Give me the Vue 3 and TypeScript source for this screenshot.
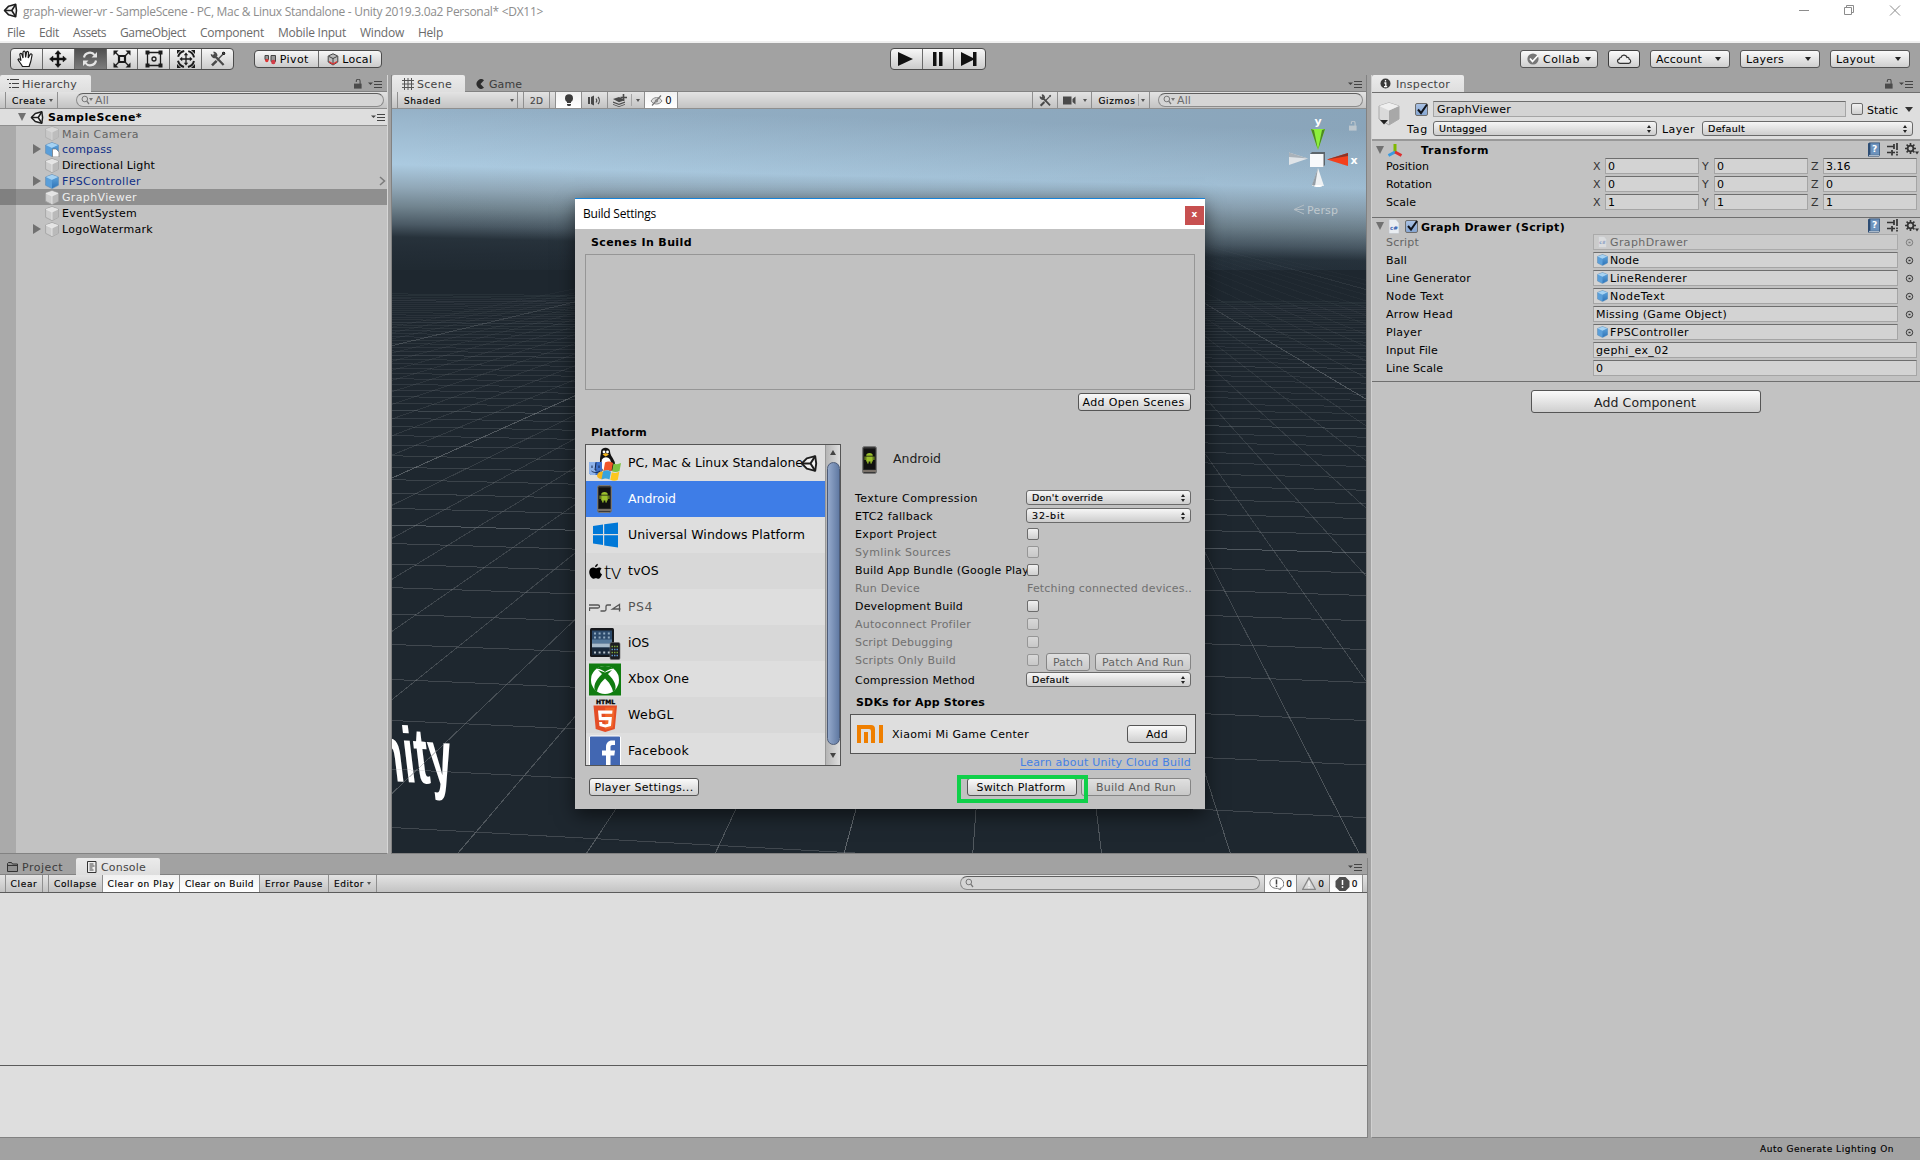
<script setup lang="ts">
import type { Directive } from 'vue'

/* Spreads the letters of an element so that its text spans the given width. */
const vFit: Directive<HTMLElement, number> = {
  mounted(el, { value }) {
    const n = (el.textContent ?? '').trim().length
    el.style.letterSpacing = '0px'
    const natural = el.getBoundingClientRect().width
    if (n > 1) el.style.letterSpacing = `${((value - natural) / n).toFixed(3)}px`
  }
}

const menus = [
  ['File', 18, 14], ['Edit', 20, 14], ['Assets', 33, 14], ['GameObject', 66, 14],
  ['Component', 64, 14], ['Mobile Input', 68, 14], ['Window', 44, 14], ['Help', 25, 0]
] as [string, number, number][]

const tools = ['hand', 'move', 'rotate', 'scale', 'rect', 'multi', 'wrench']

interface Node { name: string; w: number; kind: 'plain' | 'prefab' | 'dim'; open?: boolean; selected?: boolean; chevron?: boolean; doc?: boolean }
const nodes: Node[] = [
  { name: 'Main Camera', w: 77, kind: 'dim' },
  { name: 'compass', w: 50, kind: 'prefab', open: true, doc: true },
  { name: 'Directional Light', w: 93, kind: 'plain' },
  { name: 'FPSController', w: 79, kind: 'prefab', open: true, chevron: true },
  { name: 'GraphViewer', w: 75, kind: 'plain', selected: true },
  { name: 'EventSystem', w: 75, kind: 'plain' },
  { name: 'LogoWatermark', w: 91, kind: 'plain', open: true }
]

const transform = [
  { label: 'Position', w: 43, v: ['0', '0', '3.16'] },
  { label: 'Rotation', w: 46, v: ['0', '0', '0'] },
  { label: 'Scale', w: 30, v: ['1', '1', '1'] }
]
const axes = ['X', 'Y', 'Z']

const props = [
  { label: 'Script', w: 33, value: 'GraphDrawer', vw: 78, icon: 'cs', dim: true, pick: true },
  { label: 'Ball', w: 21, value: 'Node', vw: 29, icon: 'cube', pick: true },
  { label: 'Line Generator', w: 85, value: 'LineRenderer', vw: 77, icon: 'cube', pick: true },
  { label: 'Node Text', w: 58, value: 'NodeText', vw: 55, icon: 'cube', pick: true },
  { label: 'Arrow Head', w: 67, value: 'Missing (Game Object)', vw: 131, icon: '', pick: true },
  { label: 'Player', w: 36, value: 'FPSController', vw: 79, icon: 'cube', pick: true },
  { label: 'Input File', w: 52, value: 'gephi_ex_02', vw: 73, icon: '', pick: false },
  { label: 'Line Scale', w: 57, value: '0', vw: 7, icon: '', pick: false }
]

const platforms = [
  { id: 'pc', name: 'PC, Mac & Linux Standalone', w: 175 },
  { id: 'android', name: 'Android', w: 48 },
  { id: 'uwp', name: 'Universal Windows Platform', w: 177 },
  { id: 'tvos', name: 'tvOS', w: 31 },
  { id: 'ps4', name: 'PS4', w: 25 },
  { id: 'ios', name: 'iOS', w: 21 },
  { id: 'xbox', name: 'Xbox One', w: 61 },
  { id: 'webgl', name: 'WebGL', w: 46 },
  { id: 'fb', name: 'Facebook', w: 61 }
]

const options = [
  { label: 'Texture Compression', w: 123, popup: "Don't override", pw: 71 },
  { label: 'ETC2 fallback', w: 78, popup: '32-bit', pw: 33 },
  { label: 'Export Project', w: 82, check: true },
  { label: 'Symlink Sources', w: 96, check: true, dim: true },
  { label: 'Build App Bundle (Google Play', w: 174, check: true },
  { label: 'Run Device', w: 65, dim: true, text: 'Fetching connected devices..', tw: 165 },
  { label: 'Development Build', w: 108, check: true },
  { label: 'Autoconnect Profiler', w: 116, check: true, dim: true },
  { label: 'Script Debugging', w: 98, check: true, dim: true },
  { label: 'Scripts Only Build', w: 101, check: true, dim: true, patch: true },
  { label: 'Compression Method', w: 120, popup: 'Default', pw: 37 }
]

const HORIZON = 195
const VANISH_X = 1022
const rowLines = Array.from({ length: 54 }, (_, n) => {
  const d = 1 / (0.001581 + 0.000161 * n)
  const y1 = HORIZON + d
  return {
    y1,
    y2: HORIZON + d * (1 + 974 / 11500),
    o: Math.max(0, Math.min(0.26, (y1 - 225) / 1300 + 0.02)) * (n % 10 === 9 ? 1.5 : 1)
  }
})
const colLines = Array.from({ length: 46 }, (_, i) => {
  const xb = 458 + 128.7 * (i - 20)
  return { x: xb, major: (i - 20 + 7) % 10 === 0 }
})
</script>

<template>
  <svg width="0" height="0" class="defs">
    <defs>
      <linearGradient id="gb" x1="0" y1="0" x2="0" y2="1"><stop offset="0" stop-color="#5a9fd8" /><stop offset="1" stop-color="#2f74b8" /></linearGradient>
      <symbol id="cube" viewBox="0 0 14 15">
        <path d="M7 .5 13.4 3v8.3L7 14.6.6 11.3V3z" fill="#cdcdcd" stroke="#a0a0a0" stroke-width=".8" />
        <path d="M7 .9 13 3.1 7 6 1 3.1z" fill="#e4e4e4" />
        <path d="M7 6.2 13 3.3v7.9L7 14.2z" fill="#bababa" />
        <path d="M1 3.2 7 6l6-2.8M7 6v8" fill="none" stroke="#f0f0f0" stroke-width=".7" />
      </symbol>
      <symbol id="bcube" viewBox="0 0 14 15">
        <path d="M7 .5 13.4 3v8.3L7 14.6.6 11.3V3z" fill="#5a9fda" stroke="#5c87ad" stroke-width=".6" />
        <path d="M7 .7 13.2 3.1 7 6 .8 3.1z" fill="#a6d2f2" />
        <path d="M7 6.1 13.2 3.2v7.9L7 14.3z" fill="url(#gb)" />
      </symbol>
      <symbol id="unity" viewBox="0 0 18 18">
        <path d="M1.800 9 6.800 3.800 15.200 1.600 16.200 9 15.200 16.400 6.800 14.200z" fill="#f2f2f2" stroke="#1d1d1d" stroke-width="1.900" stroke-linejoin="round" />
        <path d="M1.800 9h8.700M15.200 1.600 10.500 9l4.700 7.400" fill="none" stroke="#1d1d1d" stroke-width="2" />
      </symbol>
      <symbol id="wrench" viewBox="0 0 16 16">
        <path d="M4.5 4.5 13.6 14M3 5.5 5.5 3" stroke="#4a4a4a" stroke-width="2.2" fill="none" />
        <path d="M1.5 3.2A3.3 3.3 0 0 0 6.4 6M3.5 1.3A3.3 3.3 0 0 1 6.6 5" stroke="#4a4a4a" stroke-width="1.7" fill="none" />
        <path d="M2 14.4 6.6 9.8" stroke="#4a4a4a" stroke-width="2.6" />
        <path d="M7 9.2 13.2 3" stroke="#4a4a4a" stroke-width="1.4" /><path d="m12 2 2-1 1 1-1 2z" fill="#4a4a4a" />
      </symbol>
      <symbol id="panelmenu" viewBox="0 0 14 8">
        <path d="M0 2.5h5L2.5 5z" fill="#444" /><path d="M6 1.5h8M6 4.5h8M6 7.5h8" stroke="#444" stroke-width="1" />
      </symbol>
      <symbol id="lock" viewBox="0 0 8 10">
        <rect x="0" y="4.6" width="7.6" height="5" fill="currentColor" /><path d="M2.3 3V2.2a1.9 1.9 0 0 1 3.8 0V5" fill="none" stroke="currentColor" stroke-width="1.1" />
      </symbol>
      <symbol id="phone" viewBox="0 0 15 28">
        <rect x=".5" y=".5" width="14" height="27" rx="2" fill="#3a3a3a" stroke="#777" /><rect x="1.8" y="2.5" width="11.4" height="21" fill="#111" />
        <path d="M1 25h13" stroke="#8b8177" stroke-width="1.6" />
        <path d="M4.2 9.8a3.3 2.8 0 0 1 6.6 0zM4.2 10.4h6.6v5H4.2zM2.6 10.6h1v3.4h-1zM11.4 10.6h1v3.4h-1zM5.2 15h1.4v2.6H5.2zM8.4 15h1.4v2.6H8.4z" fill="#9bc02c" />
      </symbol>
      <symbol id="search" viewBox="0 0 12 10">
        <circle cx="3.8" cy="4" r="2.8" fill="none" stroke="#777" stroke-width="1" /><path d="M5.8 6.2 8 9" stroke="#777" stroke-width="1.3" />
      </symbol>
      <symbol id="dots" viewBox="0 0 6 8"><path d="M3 0 5 3H1zM3 8 1 5h4z" fill="#222" /></symbol>
      <symbol id="book" viewBox="0 0 14 15">
        <path d="M1 1.5 2.5.5h10.4v12.6L12 14.5H1z" fill="#2d4d74" /><path d="M3.4 1.3h8.8v11.4H3.4z" fill="#6d93bd" />
        <path d="M2 13.4h10" stroke="#dde6ee" stroke-width=".8" />
      </symbol>
      <symbol id="preset" viewBox="0 0 12 13">
        <path d="M0 3.500h7M7 1v5M0 9.500h4M5 7v5.500M5 9.500h3M10 0v7M10 8.500v1.700M10 11v1.600" stroke="#333" stroke-width="1.700" />
      </symbol>
      <symbol id="gear" viewBox="0 0 14 12">
        <circle cx="5.5" cy="5.5" r="2.9" fill="none" stroke="#333" stroke-width="1.8" />
        <path d="M5.5 0v2M5.5 9v2M0 5.5h2M9 5.5h2M1.6 1.6 3 3M8 8l1.4 1.4M9.4 1.6 8 3M1.6 9.4 3 8" stroke="#333" stroke-width="1.6" />
        <path d="M10 8.5h4l-2 3z" fill="#333" />
      </symbol>
      <symbol id="cs" viewBox="0 0 12 15">
        <path d="M1 .5h7L11 4v10.5H1z" fill="#e9edf2" stroke="#bfc4cb" stroke-width=".6" />
        <text x="6" y="10.6" text-anchor="middle" font-family="DejaVu Sans, sans-serif" font-weight="700" font-size="5.6" fill="#3a66b5">c#</text>
      </symbol>
    </defs>
  </svg>

  <div class="app">
    <header class="title">
      <svg class="logo" width="15" height="15"><use href="#unity" /></svg>
      <span v-fit="520" class="t seg">graph-viewer-vr - SampleScene - PC, Mac &amp; Linux Standalone - Unity 2019.3.0a2 Personal* &lt;DX11&gt;</span>
      <svg class="wc" width="110" height="20" viewBox="0 0 110 20" fill="none" stroke="#8c8c8c" stroke-width="1">
        <path d="M5 10.5h10M50.5 7.5h7v7h-7zM52.5 7V5.5h7v7H58M96 5.500l10 10M106 5.500l-10 10" />
      </svg>
    </header>
    <nav class="menubar">
      <span v-for="m in menus" :key="m[0]" v-fit="m[1]" class="t seg" :style="{ marginRight: m[2] + 'px' }">{{ m[0] }}</span>
    </nav>

    <div class="toolbar">
      <div class="group tools">
        <span v-for="t in tools" :key="t" class="cell" :class="{ on: t === 'rotate' }">
          <svg width="20" height="20" viewBox="0 0 20 20" fill="none" stroke="#1c1c1c">
            <path v-if="t === 'hand'" d="M6.5 17.500c-1-2-3.500-5-4.500-7 .8-1.300 2-.5 3 1.200L3.800 5.500c.2-1.500 1.900-1.400 2.200 0l1 3.500L7 3.300c.3-1.500 2-1.500 2.300 0L9.600 8.500l.9-5.200c.5-1.300 2-1 2 .3L12.200 9l1.900-3.600c.8-1.100 2.200-.4 1.900.9-.5 2.200-.7 4.300-1.300 6.400-.4 1.700-1.200 3-1.500 4.800z" fill="#fff" stroke-width="1.2" />
            <path v-else-if="t === 'move'" d="M10 1.500 13 5h-2v4h4V7l3.500 3-3.500 3v-2h-4v4h2l-3 3.500L7 15h2v-4H5v2l-3.500-3L5 7v2h4V5H7z" fill="#111" stroke-width=".5" />
            <g v-else-if="t === 'rotate'" stroke="#e4e4e4" stroke-width="2.200">
              <path d="M4 8.500C5 3 12 2.300 14.500 6M16 11.500c-1 5.500-8 6.200-10.500 2.500" /><path d="m17 3v5.500h-5.500zM3 17v-5.500h5.500z" fill="#e4e4e4" stroke="none" />
            </g>
            <g v-else-if="t === 'scale'">
              <path d="M7 7h6v6H7z" stroke-width="2.200" /><path d="M7 7 3 3m10 4 4-4M7 13l-4 4m10-4 4 4" stroke-width="1.300" />
              <path d="M1.500 1.500h5l-5 5zM18.500 1.500h-5l5 5zM1.500 18.500h5l-5-5zM18.500 18.500h-5l5-5z" fill="#1c1c1c" stroke="none" />
            </g>
            <g v-else-if="t === 'rect'">
              <path d="M3.500 3.500h13v13h-13z" stroke-width="1.300" /><circle cx="10" cy="10" r="2" stroke-width="1.300" />
              <path d="M1.500 1.500h4v4h-4zM14.500 1.500h4v4h-4zM1.500 14.500h4v4h-4zM14.500 14.500h4v4h-4z" fill="#1c1c1c" stroke="none" />
            </g>
            <g v-else-if="t === 'multi'">
              <circle cx="10" cy="10" r="8.200" stroke-width="2" stroke-dasharray="8.800 4.100" stroke-dashoffset="-2" />
              <path d="M10 5v10M5 10h10" stroke-width="1.300" /><path d="m10 3.500 2.200 2.700H7.800zM10 16.500l2.200-2.700H7.800zM3.500 10l2.700-2.200v4.400zM16.500 10l-2.700-2.200v4.400zM1 1h4L1 5zM19 1h-4l4 4zM1 19h4l-4-4zM19 19h-4l4-4z" fill="#1c1c1c" stroke="none" />
            </g>
            <use v-else href="#wrench" x="2" y="2" width="16" height="16" />
          </svg>
        </span>
      </div>
      <div class="group pivot">
        <span class="cell"><svg width="13" height="12" viewBox="0 0 13 12"><path d="M1 2.500h3.500v4H1zM7 2.500h4.500v6H7z" fill="#999" stroke="#444" /><circle cx="2.800" cy="7.500" r="1.700" fill="#d33" /><circle cx="9.300" cy="9" r="2.200" fill="#d23c48" /></svg><b v-fit="29" class="t">Pivot</b></span>
        <span class="cell"><svg width="12" height="13" viewBox="0 0 12 13"><path d="M6 .8 10.800 3v6L6 12 1.200 9V3z" fill="#bbb" stroke="#444" /><path d="M6 5v6M2 3.500 6 5.500l4-2" stroke="#444" fill="none" /><path d="m2 8 4 2.200L10 8v1.500l-4 2.300-4-2.300z" fill="#d33" /></svg><b v-fit="30" class="t">Local</b></span>
      </div>
      <div class="group play">
        <span class="cell"><svg width="16" height="14"><path d="M0 0v14l15-7z" fill="#111" /></svg></span>
        <span class="cell"><svg width="10" height="14"><path d="M0 0h3.500v14H0zM6 0h3.500v14H6z" fill="#111" /></svg></span>
        <span class="cell"><svg width="16" height="14"><path d="M0 0v14l12-6v6h3.500V0H12v6z" fill="#111" /></svg></span>
      </div>
      <div class="account">
        <span class="btn collab"><svg width="12" height="12" viewBox="0 0 12 12"><circle cx="6" cy="6" r="5.600" fill="#777" /><path d="m3 5.500 2.500 3L11 2.500" stroke="#fff" stroke-width="1.800" fill="none" /></svg><b v-fit="37" class="t">Collab</b><i class="dn" /></span>
        <span class="btn cloud"><svg width="16" height="12" viewBox="0 0 16 12"><path d="M4 10.300h8.800a2.100 2.100 0 0 0 .4-4.100C13 4.500 11.700 4.200 11 4.500 10.300 1.800 6 1 5 4.500c-1 0-1.700.6-1.700 1.700C.7 6.700 1 10.200 4 10.300z" fill="#eee" stroke="#333" stroke-width="1.200" /></svg></span>
        <span class="btn drop"><b v-fit="46" class="t">Account</b><i class="dn" /></span>
        <span class="btn drop"><b v-fit="38" class="t">Layers</b><i class="dn" /></span>
        <span class="btn drop"><b v-fit="39" class="t">Layout</b><i class="dn" /></span>
      </div>
    </div>

    <div class="body">
      <div class="left">
        <div class="upper">
          <section class="hierarchy">
            <div class="tabs">
              <span class="tab on w91"><svg width="12" height="11" viewBox="0 0 12 11"><path d="M3 1.500h9M5 5.500h7M5 9.500h7M0 1.500h2M2 5.500h2M2 9.500h2" stroke="#444" /></svg><b v-fit="55" class="t">Hierarchy</b></span>
              <span class="tabright"><svg width="8" height="10" class="dk"><use href="#lock" /></svg><svg width="14" height="8"><use href="#panelmenu" /></svg></span>
            </div>
            <div class="bar">
              <span class="seg0" />
              <span class="bi create"><b v-fit="34" class="t s">Create</b><i class="dn sm" /></span>
              <span class="search hs"><svg width="12" height="10"><use href="#search" /></svg><i class="dn sm" /><b v-fit="14" class="t">All</b></span>
            </div>
            <div class="scenerow">
              <i class="tri open" /><svg width="14" height="15"><use href="#unity" /></svg><b v-fit="94" class="t bold">SampleScene*</b><svg class="rm" width="14" height="8"><use href="#panelmenu" /></svg>
            </div>
            <div class="tree">
              <div v-for="n in nodes" :key="n.name" class="node" :class="[n.kind, { sel: n.selected }]">
                <span class="strip" />
                <span class="fold"><i v-if="n.open" class="tri" /></span>
                <svg width="15" height="15" viewBox="0 0 15 15"><use :href="n.kind === 'prefab' ? '#bcube' : '#cube'" width="14" height="15" /><path v-if="n.doc" d="M7.500 7h3.500l3 3v5h-6.500z" fill="#fff" stroke="#777" stroke-width=".7" /></svg>
                <b v-fit="n.w" class="t">{{ n.name }}</b>
                <svg v-if="n.chevron" class="chev" width="7" height="10"><path d="m1 1 4.500 4L1 9" fill="none" stroke="#7b7b7b" stroke-width="1.500" /></svg>
              </div>
              <div class="rest"><span class="strip" /></div>
            </div>
          </section>

          <section class="scene">
            <div class="tabs">
              <span class="tab on w73"><svg width="12" height="12" viewBox="0 0 12 12"><path d="M2.500 0v12M6 0v12M9.500 0v12M0 2.500h12M0 6h12M0 9.500h12" stroke="#555" /></svg><b v-fit="35" class="t">Scene</b></span>
              <span class="tab game"><svg width="9" height="10" viewBox="0 0 9 10"><path d="M8 1.200A4.600 4.800 0 1 0 8 8.800L4.500 5z" fill="#2c2c2c" /></svg><b v-fit="33" class="t">Game</b></span>
              <span class="tabright r4"><svg width="14" height="8"><use href="#panelmenu" /></svg></span>
            </div>
            <div class="bar">
              <span class="seg0" />
              <span class="bi shaded"><b v-fit="37" class="t s">Shaded</b><i class="dn sm" /></span>
              <span class="gap5" />
              <span class="bi twod"><b v-fit="13" class="t s">2D</b></span>
              <span class="gap5" />
              <span class="bi hi w26"><svg width="10" height="13" viewBox="0 0 10 13"><circle cx="5" cy="4.200" r="4" fill="#3d3d3d" /><path d="M3 7h4v2H3zM3 10h4v1.200L6 12H4L3 11.200z" fill="#3d3d3d" /></svg></span>
              <span class="bi w26"><svg width="13" height="11" viewBox="0 0 13 11"><path d="M0 2h2v7H0zM3 2l3-1.500v10L3 9z" fill="#4a4a4a" /><path d="M8 3.500c.8 1 .8 3 0 4M10 2c1.800 2 1.800 5 0 7" stroke="#4a4a4a" fill="none" stroke-width="1.200" /></svg></span>
              <span class="bi w37"><svg width="14" height="13" viewBox="0 0 14 13"><path d="m0 5 6-2 6 3-6 2.200zM0 7.500l6 2.300 6-2.300v1.200L6 11 0 8.700zM0 10l6 2.300L12 10v.8L6 13 0 10.800z" fill="#4a4a4a" /><path d="M10.500 0v7M7.500 3.500h6.500" stroke="#4a4a4a" stroke-width="1.600" /></svg><i class="vl" /><i class="dn sm" /></span>
              <span class="bi hi w33"><svg width="13" height="11" viewBox="0 0 13 11"><path d="M1 6c2.500-4.500 8.500-4.500 11 0-2.500 4-8.500 4-11 0z" fill="#ddd" stroke="#888" /><path d="M2 10.500 11 .5" stroke="#777" stroke-width="1.200" /><circle cx="6.500" cy="5.800" r="1.600" fill="#888" /></svg><b class="t z">0</b></span>
              <span class="grow" />
              <span class="bi lft w26"><svg width="13" height="13"><use href="#wrench" /></svg></span>
              <span class="bi w34"><svg width="13" height="9"><path d="M0 .5h8.500v8H0zM9.500 3 12.500.5v8L9.500 6z" fill="#4a4a4a" /></svg><i class="dn sm" /></span>
              <span class="bi w58"><b v-fit="37" class="t s">Gizmos</b><i class="vl" /><i class="dn sm" /></span>
              <span class="search ss"><svg width="12" height="10"><use href="#search" /></svg><i class="dn sm" /><b v-fit="14" class="t">All</b></span>
            </div>
            <svg class="view" width="974" height="744" viewBox="392 109 974 744">
              <defs>
                <linearGradient id="sky" gradientUnits="userSpaceOnUse" x1="500" y1="109" x2="496" y2="270">
                  <stop offset="0" stop-color="#94b0c6" /><stop offset=".36" stop-color="#abcae0" /><stop offset=".5" stop-color="#91a8b8" /><stop offset=".62" stop-color="#71848f" />
                  <stop offset=".73" stop-color="#4b5a65" /><stop offset=".81" stop-color="#27323b" /><stop offset=".9" stop-color="#232d36" /><stop offset="1" stop-color="#202a32" />
                </linearGradient>
                <linearGradient id="side" x1="0" x2="1" y1="0" y2="0"><stop offset="0" stop-color="#1e3040" stop-opacity="0" /><stop offset="1" stop-color="#1e3040" stop-opacity=".09" /></linearGradient>
                <linearGradient id="fade" gradientUnits="userSpaceOnUse" x1="0" y1="240" x2="0" y2="853"><stop offset="0" stop-color="#858a8e" stop-opacity="0" /><stop offset=".4" stop-color="#858a8e" stop-opacity=".25" /><stop offset="1" stop-color="#858a8e" stop-opacity=".5" /></linearGradient>
                <linearGradient id="fadem" gradientUnits="userSpaceOnUse" x1="0" y1="240" x2="0" y2="600"><stop offset="0" stop-color="#94999d" stop-opacity="0" /><stop offset=".4" stop-color="#94999d" stop-opacity=".4" /><stop offset="1" stop-color="#94999d" stop-opacity=".55" /></linearGradient>
              </defs>
              <rect x="392" y="109" width="974" height="744" fill="#1e272f" />
              <rect x="392" y="109" width="974" height="161" fill="url(#sky)" />
              <rect x="392" y="109" width="974" height="161" fill="url(#side)" />
              <text class="mark" transform="matrix(.53 .035 .12 1 391 781)" x="-20" y="0">nity</text>
              <g shape-rendering="crispEdges" fill="none">
                <line v-for="(l, i) in rowLines" :key="'r' + i" x1="392" :y1="l.y1" x2="1366" :y2="l.y2" stroke="#a6abaf" :stroke-opacity="l.o" />
                <line v-for="(l, i) in colLines" :key="'c' + i" :x1="l.x" y1="853" :x2="VANISH_X + (l.x - VANISH_X) * 0.06" y2="234.500" :stroke="l.major ? 'url(#fadem)' : 'url(#fade)'" />
              </g>
              <path d="M1289 152.500 1308 158.500 1289 165z" fill="#dfe4e8" /><path d="M1289 152.500 1308 158.500 1289 157z" fill="#a9b2ba" />
              <path d="M1318 168 1324 186 1312 186z" fill="#eef1f3" /><path d="M1318 168 1315 186 1312 185z" fill="#939da5" />
              <ellipse cx="1318" cy="186" rx="4" ry="1" fill="#fff" />
              <path d="M1311 129h14l-7 21z" fill="#8df03c" /><path d="m1311 129 3 1 4 20zM1325 129l-3 1-4 20z" fill="#4d8a22" />
              <path d="M1348 153v13l-21-6.500z" fill="#f4401c" /><path d="M1348 153v3l-21 3.500zM1348 166l-3-1-18-5.500z" fill="#8b3427" />
              <path d="m1310 154 2-2h13v13l-2 2z" fill="#5d656b" /><path d="M1310 154h13.500v13H1310z" fill="#f7f9fb" />
              <text x="1318" y="125" text-anchor="middle" class="ax">y</text><text x="1354" y="164" text-anchor="middle" class="ax">x</text>
              <g class="lk"><use href="#lock" x="1349" y="121" width="8" height="10" /></g>
              <path d="m1304 205-10 4.500 10 4.500M1294 209.500h10" stroke="#b3bdc4" fill="none" />
              <text x="1307" y="214" textLength="31" class="persp">Persp</text>
            </svg>
          </section>
        </div>

        <section class="console">
          <div class="tabs">
            <span class="tab proj"><svg width="12" height="10" viewBox="0 0 12 10"><path d="M.5 9.500v-8l1-1h3l1 1.500h5v7.500zM.5 3.500h10" fill="#8f8f8f" stroke="#333" /></svg><b v-fit="41" class="t">Project</b></span>
            <span class="tab on cons"><svg width="10" height="12" viewBox="0 0 10 12"><path d="M.5.5h8.500v11H.5z" fill="#eee" stroke="#333" /><path d="M2.500 3h4M2.500 5h5M2.500 7h3M2.500 9h4" stroke="#444" /></svg><b v-fit="45" class="t">Console</b></span>
            <span class="tabright r5"><svg width="14" height="8"><use href="#panelmenu" /></svg></span>
          </div>
          <div class="bar">
            <span class="seg0" />
            <span class="bi w37"><b v-fit="27" class="t s">Clear</b></span>
            <span class="gap5" />
            <span class="bi w54"><b v-fit="43" class="t s">Collapse</b></span>
            <span class="bi hi w77"><b v-fit="67" class="t s">Clear on Play</b></span>
            <span class="bi hi w80"><b v-fit="69" class="t s">Clear on Build</b></span>
            <span class="bi w69"><b v-fit="58" class="t s">Error Pause</b></span>
            <span class="bi w48"><b v-fit="30" class="t s">Editor</b><i class="dn sm" /></span>
            <span class="grow" />
            <span class="search cs"><svg width="12" height="10"><use href="#search" /></svg></span>
            <span class="bi lft hi w33"><svg width="15" height="13" viewBox="0 0 15 13"><path d="M7.500.7c9 0 9 10.500 3.500 10.500l.5 1.500-3-1.300C-1.500 11.800-1.500.7 7.500.7z" fill="#fff" stroke="#777" /><path d="M7.500 2.500v5M7.500 8.500v1.500" stroke="#444" stroke-width="1.500" /></svg><b class="t s">0</b></span>
            <span class="bi w33"><svg width="14" height="13" viewBox="0 0 14 13"><path d="m7 .8 6.300 11.500H.7z" fill="#d9d9d9" stroke="#888" stroke-width="1.300" /><path d="M7 4v5M7 10v1.200" stroke="#f7f7f7" stroke-width="1.400" /></svg><b class="t s">0</b></span>
            <span class="bi hi w33"><svg width="15" height="14" viewBox="0 0 15 14"><path d="M4.500 0h6L14.500 4v6l-4 4h-6l-4-4V4z" fill="#4d4d4d" /><path d="M7.500 3v5M7.500 9.200v1.800" stroke="#fff" stroke-width="1.500" /></svg><b class="t s">0</b></span>
            <span class="end" />
          </div>
          <div class="log" /><div class="detail" />
        </section>
      </div>

      <aside class="inspector">
        <div class="tabs">
          <span class="tab on insp"><svg width="11" height="11"><circle cx="5.500" cy="5.500" r="5" fill="#3a3a3a" /><path d="M5.500 2v1.600M4.300 5h1.500v3.500M4 8.700h3.200" stroke="#fff" stroke-width="1.300" fill="none" /></svg><b v-fit="54" class="t">Inspector</b></span>
          <span class="tabright r7"><svg width="8" height="10" class="dk"><use href="#lock" /></svg><svg width="14" height="8"><use href="#panelmenu" /></svg></span>
        </div>
        <div class="obj">
          <div class="big"><svg width="22" height="24" viewBox="0 0 22 24"><path d="M11 .8 21 4v13L11 23 1 17V4z" fill="#dadada" stroke="#aaa" /><path d="M11 8.500 21 4v13L11 23z" fill="#a8a8a8" /><path d="M11 .8 21 4 11 8.500 1 4z" fill="#efefef" /><path d="M2 18h8l-4 4.500z" fill="#222" /></svg></div>
          <div class="objr">
            <div class="line1"><span class="cb on"><svg width="13" height="13"><path d="M2 6.500 5 10 11 1.500" stroke="#10131a" stroke-width="2" fill="none" /></svg></span><span class="field nm"><b v-fit="74" class="t">GraphViewer</b></span><span class="cb st" /><b v-fit="31" class="t stt">Static</b><i class="dn big2" /></div>
            <div class="line2"><b v-fit="21" class="t tag">Tag</b><span class="pop tagp"><b v-fit="48" class="t s9">Untagged</b><svg width="6" height="8"><use href="#dots" /></svg></span><b v-fit="33" class="t lay">Layer</b><span class="pop layp"><b v-fit="37" class="t s9">Default</b><svg width="6" height="8"><use href="#dots" /></svg></span></div>
          </div>
        </div>
        <div class="comp">
          <div class="chead h17"><i class="tri open" /><svg class="ti" width="16" height="14" viewBox="0 0 16 14"><path d="M8 1v8" stroke="#7fb800" stroke-width="3" /><path d="m8 9-6.500 3.500" stroke="#3a9be0" stroke-width="3" /><path d="m8 9 6.500 3.500" stroke="#dc2f2f" stroke-width="3" /></svg><b v-fit="68" class="t bold">Transform</b>
            <span class="ic"><span class="bk"><svg width="14" height="15"><use href="#book" /></svg><em>?</em></span><svg width="12" height="13"><use href="#preset" /></svg><svg width="14" height="12"><use href="#gear" /></svg></span></div>
          <div v-for="r in transform" :key="r.label" class="prow">
            <span class="pl"><b v-fit="r.w" class="t">{{ r.label }}</b></span>
            <span v-for="(v, i) in r.v" :key="i" class="ax3"><b class="t a">{{ axes[i] }}</b><span class="field"><b class="t">{{ v }}</b></span></span>
          </div>
        </div>
        <div class="comp">
          <div class="chead h16"><i class="tri open" /><svg class="ci" width="12" height="15"><use href="#cs" /></svg><span class="cb on c2"><svg width="13" height="13"><path d="M2 6 5 9.500 11 1" stroke="#10131a" stroke-width="2" fill="none" /></svg></span><b v-fit="144" class="t bold">Graph Drawer (Script)</b>
            <span class="ic"><span class="bk"><svg width="14" height="15"><use href="#book" /></svg><em>?</em></span><svg width="12" height="13"><use href="#preset" /></svg><svg width="14" height="12"><use href="#gear" /></svg></span></div>
          <div v-for="p in props" :key="p.label" class="prow" :class="{ dim: p.dim }">
            <span class="pl"><b v-fit="p.w" class="t">{{ p.label }}</b></span>
            <span class="field ob" :class="{ wide: !p.pick }"><svg v-if="p.icon" width="11" height="12"><use :href="p.icon === 'cs' ? '#cs' : '#bcube'" /></svg><b v-fit="p.vw" class="t">{{ p.value }}</b></span>
            <svg v-if="p.pick" class="pick" width="9" height="9"><circle cx="4.500" cy="4.500" r="3.200" fill="none" stroke="#333" /><path d="M3.500 4.500h2" stroke="#333" stroke-width="1.500" /></svg>
          </div>
        </div>
        <span class="btn addc"><b v-fit="102" class="t">Add Component</b></span>
      </aside>
    </div>

    <footer class="status"><b v-fit="134" class="t s">Auto Generate Lighting On</b></footer>

    <div class="dialog">
      <div class="dtitle"><span v-fit="73" class="t seg">Build Settings</span><span class="x">x</span></div>
      <div class="dh"><b v-fit="101" class="t bold">Scenes In Build</b></div>
      <div class="scenes" />
      <div class="addrow"><span class="btn w113"><b v-fit="102" class="t">Add Open Scenes</b></span></div>
      <div class="dh plat"><b v-fit="56" class="t bold">Platform</b></div>
      <div class="cols">
        <div class="list">
          <div class="rows">
            <div v-for="p in platforms" :key="p.id" class="plt" :class="{ sel: p.id === 'android', off: p.id === 'ps4' }">
              <svg width="32" height="36" viewBox="0 0.5 32 36">
                <g v-if="p.id === 'pc'">
                  <path d="M11 17C11 11 12 10 12 7c0-5 9-5 9 0 0 3 2 5 4 9 2 3 1 8-1 10H12c-3-2-2-7-1-9z" fill="#111" /><path d="M13 15c2-3 6-3 8 0 2 4 1 9-1 11h-6c-2-3-2-8-1-11z" fill="#fff" />
                  <circle cx="15" cy="7.500" r="1.400" fill="#fff" /><circle cx="18.500" cy="7.500" r="1.400" fill="#fff" /><path d="m13.500 10 3.200-1.500L20 10l-3.300 2z" fill="#f3b51c" />
                  <path d="M0 17.500h13v13H2L0 29z" fill="#3c6fc9" /><path d="M0 17.500h6.500v13H2L0 29z" fill="#8fb3ea" /><path d="M3 21v2.500M10 21v2.500M2.500 26.500c2.500 2 6 2 8.500 0M7 18l-1 7.500h1.500" stroke="#15254a" fill="none" />
                  <path d="M8 31c1-4 5-5 8-3l-1 6c-3 1-7 0-7-3z" fill="#f3b51c" />
                  <path d="M16 18c3-1.500 5-1 8 .5l-1.500 8c-3-1.500-5-1.500-8 0z" fill="#f0562a" /><path d="M24.500 19c3 1 5 .8 7.500-.5l-1.500 8c-2.500 1.300-5 1.300-7.500.2z" fill="#7cc242" />
                  <path d="M14 27c3-1.500 5-1.200 8 .3L20.500 35c-3-1.500-5-1.500-8 0z" fill="#37a3dd" /><path d="M22.800 27.800c3 1 5 .8 7.500-.5l-1.500 8c-2.500 1.300-5 1-7.500 0z" fill="#fcc71f" />
                </g>
                <use v-else-if="p.id === 'android'" href="#phone" x="8" y="4.500" width="15" height="28" />
                <path v-else-if="p.id === 'uwp'" d="M4 9.500 14 8v9.500H4zM15.200 7.800 29 6v11.500H15.200zM4 18.800h10v9.700L4 27zM15.200 18.800H29V31l-13.800-2z" fill="#0078d7" />
                <g v-else-if="p.id === 'tvos'">
                  <path d="M6 12.800C6 10.800 7.200 9.600 8.800 9.200 9 11 7.800 12.600 6 12.800zM6.800 13.800c1 0 2-.9 3.300-.8 1 0 1.900.5 2.500 1.300-2.200 1.400-1.900 4.500.4 5.400-.6 2-2.200 4.600-3.600 4.600-1 0-1.300-.6-2.500-.6s-1.600.6-2.500.6C2 24.300-.4 19.300.4 16.300c.5-2 2-3.200 3.500-3.200 1.200 0 2 .7 2.900.7z" transform="translate(0 2)" fill="#000" />
                  <text x="15" y="26" textLength="17" lengthAdjust="spacingAndGlyphs" font-family="Open Sans, sans-serif" font-weight="300" font-size="19.500" fill="#000">tv</text>
                </g>
                <path v-else-if="p.id === 'ps4'" d="M.5 22.500v-3h8.500q1.500 0 1.500-1.500t-1.500-1.500H0M11.500 22.500h4q1.500 0 1.500-1.500v-3q0-1.500 1.500-1.500H22M31.500 20.500h-8l7-4.500v7" fill="none" stroke="#555" stroke-width="1.300" />
                <g v-else-if="p.id === 'ios'">
                  <rect x="1" y="3.500" width="24" height="29" rx="1.500" fill="#16181c" /><rect x="3" y="6" width="20" height="24" fill="#2c4a6b" /><rect x="3" y="15" width="20" height="4" fill="#56799a" /><rect x="3" y="19" width="20" height="4" fill="#a9bccb" /><rect x="3" y="23" width="20" height="7" fill="#1b2a3b" />
                  <path d="M5 9h16M5 13h16" stroke="#8fa9c0" stroke-width="2" stroke-dasharray="2 2.600" /><path d="M5 28h16" stroke="#b9c4cc" stroke-width="2" stroke-dasharray="2 2.600" />
                  <rect x="21" y="18" width="10" height="17" rx="1.500" fill="#1c1d20" stroke="#666" stroke-width=".6" /><path d="M22.500 22h7.500M22.500 28h7.500" stroke="#7aa13b" stroke-width="1.600" stroke-dasharray="1.500 1" /><path d="M22.500 25h7.500M22.500 31h7.500" stroke="#5c93c9" stroke-width="1.600" stroke-dasharray="1.500 1" />
                </g>
                <g v-else-if="p.id === 'xbox'">
                  <rect y="3" width="32" height="32" fill="#107c10" /><circle cx="16" cy="19.500" r="14" fill="#fff" />
                  <path d="M7 8.500c3-.8 6 .8 9 3 3-2.200 6-3.800 9-3C21 4.500 11 4.500 7 8.500zM13 13.500C6 20 4.500 26 5.800 29.200L8 31.500C8.500 27 12 21.500 16 18c4 3.500 7.500 9 8 13.500l2.200-2.300c1.300-3.200-.2-9.200-7.200-15.700l4-4-7 2.500-7-2.500z" fill="#107c10" />
                </g>
                <g v-else-if="p.id === 'webgl'">
                  <text x="7" y="7.500" textLength="19" lengthAdjust="spacingAndGlyphs" font-family="DejaVu Sans, sans-serif" font-weight="700" font-size="6" fill="#000" stroke="#000" stroke-width=".3">HTML</text>
                  <path d="M4.500 9H28l-2.200 23.500L16.200 35.500 6.700 32.500z" fill="#e44d26" /><path d="M16.200 11H25.800L24 31l-7.800 2.300z" fill="#f16529" />
                  <path d="M9 14h14.500l-.3 3.200H12.500l.2 3.300h10.200l-.9 9L16.200 31l-5.700-1.500-.4-4h3l.2 1.800 2.900.8 3-.8.3-3.500H9.900z" fill="#fff" />
                </g>
                <g v-else>
                  <path d="M.5 36.500V4.500l1-1h29l1 1V36.500z" fill="#4267b2" stroke="#fff" /><path d="M17 37V23h-4v-5h4v-3.500C17 10.500 19.500 8 23 8h3v4.500h-2.500c-1.500 0-2 .8-2 2V18h4.500l-.7 5h-3.800v14z" fill="#fff" />
                </g>
              </svg>
              <b v-fit="p.w" class="t">{{ p.name }}</b>
              <svg v-if="p.id === 'pc'" class="cur" width="18" height="19"><use href="#unity" /></svg>
            </div>
          </div>
          <div class="sbar"><i class="up" /><span class="thumb" /><i class="down" /></div>
        </div>
        <div class="opts">
          <div class="ohead"><svg width="15" height="28"><use href="#phone" /></svg><b v-fit="48" class="t">Android</b></div>
          <div v-for="o in options" :key="o.label" class="orow" :class="{ dim: o.dim, last: o.label === 'Compression Method' }">
            <span class="ol"><b v-fit="o.w" class="t">{{ o.label }}</b></span>
            <span v-if="o.popup" class="pop op"><b v-fit="o.pw!" class="t s9">{{ o.popup }}</b><svg width="6" height="8"><use href="#dots" /></svg></span>
            <span v-if="o.check" class="cb oc" />
            <b v-if="o.text" v-fit="o.tw!" class="t ot">{{ o.text }}</b>
            <template v-if="o.patch"><span class="btn p1"><b v-fit="30" class="t">Patch</b></span><span class="btn p2"><b v-fit="82" class="t">Patch And Run</b></span></template>
          </div>
          <div class="sdk"><b v-fit="129" class="t bold">SDKs for App Stores</b></div>
          <div class="mi">
            <svg width="27" height="18"><path d="M0 0h14q4 0 4 4v14h-4V6q0-2-2-2H4v14H0zM7 7h4v11H7zM22 0h4v18h-4z" fill="#ef7f00" /></svg>
            <b v-fit="137" class="t">Xiaomi Mi Game Center</b><span class="btn w60"><b v-fit="22" class="t">Add</b></span>
          </div>
          <div class="link"><b v-fit="171" class="t">Learn about Unity Cloud Build</b></div>
        </div>
      </div>
      <div class="foot"><span class="btn w110"><b v-fit="99" class="t">Player Settings...</b></span><span class="grow" /><span class="btn w110 sw"><b v-fit="89" class="t">Switch Platform</b></span><span class="btn w110 dimb"><b v-fit="80" class="t">Build And Run</b></span></div>
      <div class="mark-box" />
    </div>
  </div>
</template>

<style>
body { margin: 0; overflow: hidden; }
</style>

<style scoped>
* { box-sizing: border-box; }
.defs { position: absolute; }
.app { position: relative; width: 1920px; height: 1160px; overflow: hidden; display: flex; flex-direction: column; background: #a2a2a2; font-family: "DejaVu Sans", Verdana, sans-serif; font-size: 11px; color: #000; }
.app svg { flex: none; display: block; }
.t { display: inline-block; flex: none; white-space: nowrap; font-weight: 400; }
.t.bold { font-weight: 700; font-size: 11px; }
.t.s { font-size: 9px; -webkit-text-stroke: .15px currentColor; }
.t.s9 { font-size: 9.500px; -webkit-text-stroke: .15px currentColor; }
.t.seg { font-family: "Open Sans", "Noto Sans", sans-serif; font-size: 12px; }
.node .t, .prow .t, .chead .t, .scenerow .t, .tab .t, .line1 .t, .line2 > .t, .bar .t, .orow > .ot, .ol .t, .btn .t { padding-top: 2px; }
.grow { flex: 1; }
.dk { color: #4b4b4b; }
.lk { color: #bcc6cd; }

.title { height: 24px; background: #fff; display: flex; align-items: center; flex: none; padding-left: 3px; color: #8d8d8d; }
.logo { margin: -4px 5px 0 0; }
.title .t { line-height: 24px; }
.wc { margin-left: auto; margin-right: 16px; margin-top: -4px; }
.menubar { height: 19px; flex: none; display: flex; background: #fff; border-bottom: 2px solid #f0f0f0; padding-left: 7px; color: #6a6a6a; line-height: 17px; }

.toolbar { height: 32px; flex: none; display: flex; padding-left: 10px; }
.group { display: flex; border: 1px solid #4b4b4b; border-radius: 4px; overflow: hidden; background: linear-gradient(#f7f7f7, #cbcbcb); }
.cell { flex: 1; display: flex; align-items: center; justify-content: center; }
.cell + .cell { border-left: 1px solid #6a6a6a; }
.cell.on { background: linear-gradient(#4f4f4f, #7c7c7c); }
.tools { width: 224px; height: 22px; margin-top: 5px; }
.pivot { width: 128px; height: 18px; margin: 7px 0 0 20px; }
.pivot .cell { gap: 3px; line-height: 16px; }
.pivot .t { padding-top: 2px; }
.play { width: 96px; height: 22px; margin: 5px 0 0 508px; }
.play .cell { padding-right: 1px; }
.btn { display: flex; align-items: center; justify-content: center; flex: none; height: 18px; border: 1px solid #555; border-radius: 3px; background: linear-gradient(#fafafa, #cfcfcf); line-height: 16px; }
.account { display: flex; gap: 10px; margin: 7px 0 0 534px; }
.collab { width: 78px; gap: 4px; }
.collab .dn { margin-left: 1px; }
.cloud { width: 32px; border-color: #3d3d3d; }
.drop { width: 80px; justify-content: space-between; padding: 0 8px 0 5px; }
.dn { flex: none; width: 0; height: 0; border: 3px solid transparent; border-top: 4px solid #222; border-bottom: 0; }
.dn.sm { border-width: 3px 2.500px 0; border-top-color: #555; }

.body { display: flex; height: 1063px; flex: none; }
.left { width: 1371px; flex: none; display: flex; flex-direction: column; gap: 4px; }
.upper { display: flex; height: 779px; gap: 3px; }
.tabs { display: flex; height: 17px; flex: none; border-bottom: 1px solid #828282; color: #3c3c3c; line-height: 17px; }
.tab { display: flex; align-items: center; height: 17px; }
.tab.on { background: linear-gradient(#ebebeb, #dedede); border-radius: 2px 2px 0 0; color: #444; }
.w91 { width: 91px; padding-left: 7px; gap: 3px; }
.w73 { width: 73px; padding-left: 10px; gap: 3px; }
.game { padding-left: 11px; gap: 4px; }
.proj { width: 76px; padding-left: 7px; gap: 3px; }
.cons { width: 84px; padding-left: 11px; gap: 4px; }
.insp { width: 92px; padding-left: 8px; gap: 5px; }
.tabright { margin-left: auto; display: flex; align-items: center; gap: 6px; padding-right: 5px; padding-top: 1px; }
.tabright.r4 { padding-right: 4px; }
.tabright.r5 { padding-right: 5px; }
.bar { display: flex; height: 17px; flex: none; background: linear-gradient(#e3e3e3, #c3c3c3); border-bottom: 1px solid #8f8f8f; line-height: 16px; }
.seg0 { width: 6px; border-right: 1px solid #8f8f8f; }
.gap5 { width: 6px; border-right: 1px solid #8f8f8f; }
.bi { display: flex; align-items: center; justify-content: center; flex: none; border-right: 1px solid #8f8f8f; }
.bi.hi { background: linear-gradient(#f2f2f2, #fff); }
.bi.lft { border-left: 1px solid #8f8f8f; }
.create { width: 52px; justify-content: space-between; padding: 0 4px 0 6px; }
.shaded { width: 120px; justify-content: space-between; padding: 0 3px 0 6px; }
.twod { width: 26px; color: #444; }
.w26 { width: 26px; } .w33 { width: 33px; } .w34 { width: 34px; gap: 7px; } .w37 { width: 37px; gap: 4px; } .w58 { width: 58px; gap: 2px; padding-left: 2px; }
.w54 { width: 54px; } .w77 { width: 77px; } .w80 { width: 80px; } .w69 { width: 69px; } .w48 { width: 48px; gap: 3px; }
.w33 { gap: 2px; }
.vl { width: 1px; height: 12px; background: #a5a5a5; }
.t.z { font-size: 10px; }
.search { display: flex; align-items: center; height: 14px; margin-top: 1px; border: 1px solid #8c8c8c; border-top-color: #5e5e5e; border-radius: 7px; background: #d5d5d5; color: #6d6d6d; padding-left: 4px; flex: none; }
.search .dn { margin: 0 2px 2px -4px; border-top-color: #777; }
.hs { width: 308px; margin-left: 18px; }
.ss { width: 205px; margin: 1px 3px 0 8px; }
.cs { width: 300px; margin-right: 4px; }
.end { width: 4px; }

.hierarchy { width: 388px; flex: none; display: flex; flex-direction: column; border-right: 1px solid #d6d6d6; border-bottom: 1px solid #828282; }
.scenerow { height: 17px; flex: none; display: flex; align-items: center; background: #dedede; border-bottom: 1px solid #8f8f8f; padding-left: 18px; line-height: 16px; }
.scenerow .tri { margin-right: 4px; } .scenerow .bold { margin-left: 4px; }
.rm { margin-left: auto; margin-right: 2px; }
.tri { width: 0; height: 0; flex: none; border: 5px solid transparent; border-left: 8px solid #717171; border-right: 0; }
.tri.open { border: 4.500px solid transparent; border-top: 8px solid #717171; border-bottom: 0; }
.tree { flex: 1; background: #c2c2c2; display: flex; flex-direction: column; }
.node { height: 16px; display: flex; align-items: center; line-height: 16px; flex: none; }
.node:first-child { height: 15px; }
.node:first-child .t { padding-top: 3px; }
.strip { width: 16px; align-self: stretch; background: #aaa; flex: none; }
.fold { width: 29px; padding-left: 17px; display: flex; flex: none; }
.node .t { margin-left: 2px; }
.node.dim { color: #646464; } .node.dim svg { opacity: .6; }
.node.prefab { color: #0f2f86; }
.node.sel { background: #8f8f8f; color: #eee; }
.node.sel .strip { background: #808080; }
.chev { margin-left: auto; margin-right: 1px; }
.rest { flex: 1; display: flex; }

.scene { width: 976px; border-left: 1px solid #828282; border-right: 1px solid #828282; border-bottom: 1px solid #828282; }
.mark { font: 700 79px "Liberation Sans", Arial, sans-serif; fill: #fff; }
.ax { font: 700 11px "DejaVu Sans", sans-serif; fill: #fff; }
.persp { font: 11px "DejaVu Sans", sans-serif; fill: #c0c9ce; }

.console { width: 1368px; height: 280px; display: flex; flex-direction: column; border-right: 1px solid #828282; border-bottom: 1px solid #828282; }
.console .bar { height: 18px; border-bottom: 1px solid #5b5b5b; }
.console .bar .t { padding-top: 1px; }
.log { height: 173px; flex: none; background: #dedede; border-bottom: 1px solid #5b5b5b; }
.detail { flex: 1; background: #dedede; }

.inspector { flex: 1; background: #c2c2c2; display: flex; flex-direction: column; border-bottom: 1px solid #828282; border-left: 1px solid #d0d0d0; }
.inspector .tabs { background: #a2a2a2; height: 18px; border-bottom: 1px solid #6f6f6f; }
.tabright.r7 { padding-right: 7px; }
.obj { height: 48px; background: #dedede; border-bottom: 2px solid #989898; display: flex; padding-left: 6px; flex: none; }
.big { padding-top: 9px; width: 24px; }
.objr { flex: 1; }
.line1 { display: flex; align-items: center; height: 16px; margin-top: 8px; padding-left: 13px; }
.field { height: 16px; border: 1px solid #a5a5a5; border-top-color: #6e6e6e; background: #d3d3d3; display: flex; align-items: center; line-height: 14px; padding-left: 2px; flex: none; }
.nm { width: 413px; margin-left: 5px; padding-left: 3px; }
.cb { width: 12px; height: 12px; border: 1px solid #6c6c6c; border-radius: 2px; background: linear-gradient(#f1f1f1, #cfcfcf); flex: none; display: flex; }
.cb.on { width: 13px; height: 13px; background: linear-gradient(#a9c1e3, #86a6d2); }
.cb svg { margin: -1px 0 0 0; }
.st { margin: 0 4px 0 5px; }
.stt { margin-right: 7px; }
.dn.big2 { border-width: 5px 4.500px 0; border-top-color: #333; }
.line2 { display: flex; align-items: center; height: 15px; margin-top: 4px; padding-left: 5px; }
.pop { height: 15px; border: 1px solid #6a6a6a; border-radius: 3px; background: linear-gradient(#f6f6f6, #cdcdcd); display: flex; align-items: center; justify-content: space-between; padding: 0 4px 0 5px; line-height: 13px; flex: none; }
.tagp { width: 224px; margin-left: 5px; } .lay { margin-left: 5px; } .layp { width: 211px; margin-left: 7px; }
.comp { border-bottom: 1px solid #6f6f6f; padding-bottom: 5px; flex: none; }
.chead { display: flex; align-items: center; padding: 0 1px 0 4px; }
.h17 { height: 17px; } .h16 { height: 16px; }
.ti { margin: 0 18px 0 3px; }
.ci { margin: 0 5px 0 4px; } .c2 { margin-right: 3px; }
.ic { margin-left: auto; display: flex; align-items: center; gap: 6px; margin-top: -1px; }
.bk { position: relative; }
.bk em { position: absolute; left: 5px; top: 2px; font: 700 9px/11px "DejaVu Sans", sans-serif; color: #fff; }
.prow { display: flex; align-items: center; height: 16px; margin-bottom: 2px; padding-left: 14px; line-height: 16px; }
.comp:last-of-type .prow:last-child { margin-bottom: 0; }
.pl { width: 207px; flex: none; display: flex; }
.ax3 { display: flex; align-items: center; height: 16px; margin-right: 3px; } .ax3 .a { width: 12px; color: #333; } .ax3 .field { width: 94px; }
.ob { width: 305px; } .ob.wide { width: 324px; } .ob svg { margin: 0 2px 0 1px; }
.pick { margin-left: 7px; }
.prow.dim .t, .prow.dim svg { opacity: .5; }
.prow.dim .field { background: #cbcbcb; border-color: #aaa; }
.addc { width: 230px; height: 23px; margin: 8px auto 0 159px; font-size: 12.500px; color: #222; }
.addc .t { margin-right: 2px; }

.status { height: 22px; display: flex; align-items: center; justify-content: flex-end; padding-right: 26px; }

.dialog { position: absolute; left: 575px; top: 198px; width: 630px; height: 611px; background: #c1c1c1; border-top: 1px solid #1883d7; box-shadow: 0 6px 18px rgba(0, 0, 0, .55); display: flex; flex-direction: column; }
.dtitle { height: 30px; flex: none; background: #fff; display: flex; align-items: center; justify-content: space-between; padding: 0 1px 0 8px; }
.dtitle .t { line-height: 17px; margin-bottom: 2px; }
.x { width: 19px; height: 19px; background: #c75050; color: #fff; font-weight: 700; font-size: 9px; line-height: 17px; text-align: center; margin-top: 3px; }
.dh { height: 25px; flex: none; padding-left: 16px; line-height: 27px; }
.scenes { height: 136px; flex: none; margin: 0 10px; border: 1px solid #969696; }
.addrow { display: flex; justify-content: flex-end; padding: 3px 14px 0 0; flex: none; }
.w113 { width: 113px; }
.addrow .t { margin-right: 2px; }
.plat { height: 33px; line-height: 43px; }
.cols { display: flex; height: 326px; flex: none; padding-left: 10px; gap: 9px; }
.list { width: 256px; height: 322px; border: 1px solid #555; display: flex; overflow: hidden; flex: none; }
.rows { width: 239px; overflow: hidden; }
.plt { height: 36px; display: flex; align-items: flex-start; padding-left: 3px; font-size: 12.500px; background: #dedede; line-height: 35px; position: relative; }
.plt:nth-child(even) { background: #d8d8d8; }
.plt .t { margin-left: 7px; }
.plt.sel { background: #3e7de7; color: #fff; }
.plt.off .t { color: #555; }
.cur { position: absolute; right: 7px; top: 9px; }
.sbar { width: 15px; background: linear-gradient(90deg, #b5b5b5, #dedede); border-left: 1px solid #999; display: flex; flex-direction: column; align-items: center; }
.up { width: 0; height: 0; border: 3.500px solid transparent; border-top: 0; border-bottom: 5px solid #444; margin: 5px 0 7px; }
.thumb { width: 13px; height: 283px; border: 1px solid #4d5c78; border-radius: 7px; background: linear-gradient(90deg, #94a9cb, #617aa3); }
.down { width: 0; height: 0; border: 3.500px solid transparent; border-bottom: 0; border-top: 5px solid #444; margin-top: 8px; }
.opts { width: 346px; }
.ohead { height: 45px; display: flex; padding: 2px 0 0 12px; font-size: 12.500px; line-height: 26px; gap: 16px; color: #222; }
.orow { height: 18px; display: flex; align-items: center; padding-left: 5px; line-height: 18px; }
.orow.last { margin-top: 2px; }
.ol { width: 171px; flex: none; display: flex; }
.op { width: 165px; margin-bottom: 1px; }
.oc { margin-left: 1px; }
.ot { margin-left: 1px; }
.orow.dim { color: #707070; } .orow.dim .cb { opacity: .5; }
.p1 { width: 44px; margin: 4px 5px 0 7px; opacity: .55; color: #111; } .p2 { width: 96px; margin-top: 4px; opacity: .55; color: #111; }
.sdk { height: 25px; line-height: 28px; padding-left: 6px; }
.mi { height: 40px; border: 1px solid #555; background: #dedede; display: flex; align-items: center; padding: 0 8px 0 6px; }
.mi .t { margin-left: 8px; padding-top: 2px; line-height: 16px; } .mi .btn { margin-left: auto; } .mi .btn .t { margin: 0; }
.w60 { width: 60px; }
.link { display: flex; justify-content: flex-end; padding-right: 5px; color: #4480e4; line-height: 17px; }
.link .t { border-bottom: 1.500px solid #4a80e4; height: 16px; }
.foot { display: flex; padding: 8px 14px 0; gap: 4px; }
.w110 { width: 110px; }
.sw .t { margin-right: 2px; }
.dimb { opacity: .55; }
.mark-box { position: absolute; left: 382px; top: 576px; width: 131px; height: 28px; border: 4px solid #10d04a; }
</style>
